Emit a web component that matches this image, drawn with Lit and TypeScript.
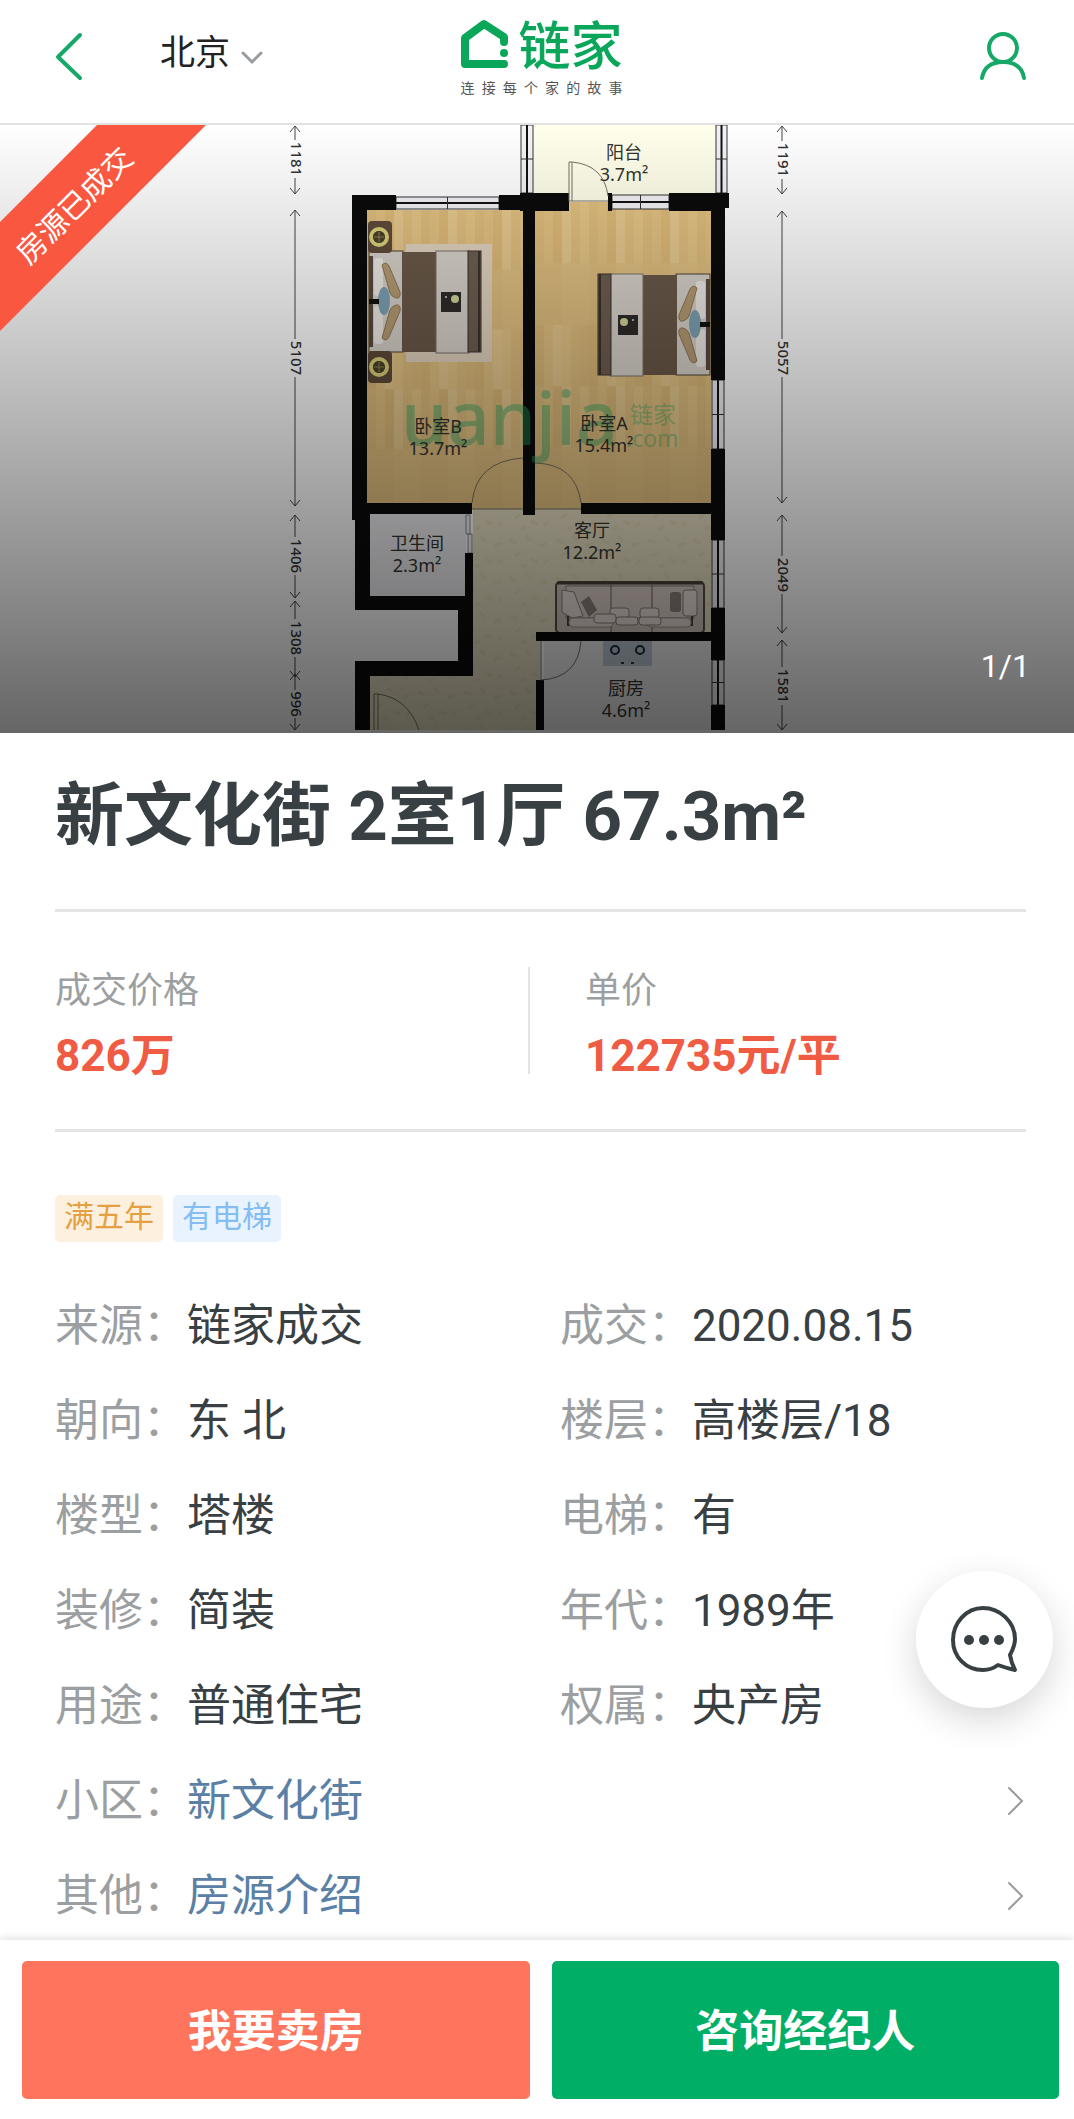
import { LitElement, html, svg, css } from "lit";
import { customElement, property } from "lit/decorators.js";

interface Fact {
  label: string;
  value: string;
}

const FACTS: Fact[] = [
  { label: "来源", value: "链家成交" },
  { label: "成交", value: "2020.08.15" },
  { label: "朝向", value: "东 北" },
  { label: "楼层", value: "高楼层/18" },
  { label: "楼型", value: "塔楼" },
  { label: "电梯", value: "有" },
  { label: "装修", value: "简装" },
  { label: "年代", value: "1989年" },
  { label: "用途", value: "普通住宅" },
  { label: "权属", value: "央产房" },
];

const LINKS: Fact[] = [
  { label: "小区", value: "新文化街" },
  { label: "其他", value: "房源介绍" },
];

/* Walls of the flat: x, y, width, height */
const WALLS = [
  [352, 195, 15, 325],
  [352, 195, 44, 15],
  [499, 195, 24, 15],
  [520, 193, 49, 18],
  [523, 195, 12, 320],
  [352, 503, 120, 11],
  [355, 514, 15, 96],
  [355, 596, 118, 14],
  [465, 553, 8, 57],
  [458, 596, 15, 80],
  [355, 661, 118, 15],
  [355, 661, 15, 69],
  [608, 193, 4, 18],
  [669, 193, 60, 15],
  [669, 193, 42, 18],
  [711, 193, 14, 187],
  [581, 503, 130, 11],
  [711, 449, 14, 91],
  [711, 608, 14, 52],
  [711, 705, 14, 25],
  [536, 632, 175, 9],
  [536, 680, 8, 50],
];

/* Upright windows: x, y, width, height */
const WINDOWS_V = [
  [521, 125, 12, 68],
  [716, 125, 11, 68],
  [712, 380, 12, 69],
  [712, 540, 12, 68],
  [712, 660, 12, 45],
];

/* Level windows: x, y, width, height */
const WINDOWS_H = [
  [396, 197, 103, 12],
  [612, 195, 57, 14],
];

/* Room names with the centre line and baseline of the first row */
const ROOMS: [string, string, number, number][] = [
  ["阳台", "3.7m²", 624, 159],
  ["卧室B", "13.7m²", 438, 433],
  ["卧室A", "15.4m²", 604, 430],
  ["卫生间", "2.3m²", 417, 550],
  ["客厅", "12.2m²", 592, 537],
  ["厨房", "4.6m²", 626, 695],
];

/* Dimension chains: start, end, middle of the number, number */
type Dim = [number, number, number, string];
const DIMS_LEFT: Dim[] = [
  [126, 194, 159, "1181"],
  [210, 506, 358, "5107"],
  [515, 598, 556, "1406"],
  [601, 677, 638, "1308"],
  [674, 730, 704, "996"],
];
const DIMS_RIGHT: Dim[] = [
  [126, 194, 160, "1191"],
  [211, 503, 358, "5057"],
  [515, 633, 575, "2049"],
  [640, 730, 686, "1581"],
];

@customElement("floor-plan")
export class FloorPlan extends LitElement {
  static styles = css`
    :host {
      display: block;
    }
    .plan {
      display: block;
      width: 100%;
      height: auto;
    }
    .room {
      font: 18px "Noto Sans", "Noto Sans CJK SC", sans-serif;
      fill: #33332e;
      text-anchor: middle;
    }
    .dim {
      font: 500 15px "Noto Sans", sans-serif;
      fill: #333;
      text-anchor: middle;
    }
    .mark {
      font: 500 74px "Noto Sans", sans-serif;
      fill: #2fa565;
      opacity: 0.45;
    }
    .mark-small {
      font: 23px "Noto Sans", "Noto Sans CJK SC", sans-serif;
      fill: #2fa565;
      opacity: 0.4;
    }
    .ribbon-text {
      font: 30px Roboto, "Noto Sans CJK SC", sans-serif;
      fill: #fff;
      text-anchor: middle;
    }
  `;

  private dims(x: number, list: Dim[]) {
    return list.map(([a, b, mid, text]) => {
      const half = text.length * 5 - 1;
      return svg`
        <path
          d="M${x} ${a}V${mid - half}M${x} ${mid + half}V${b}M${x - 5} ${a + 6}L${x} ${a}L${x + 5} ${a + 6}M${x - 5} ${b - 6}L${x} ${b}L${x + 5} ${b - 6}"
          fill="none" stroke="#444" stroke-width="1"
        />
        <text class="dim" transform="translate(${x - 4} ${mid}) rotate(90)">${text}</text>
      `;
    });
  }

  private planks(x: number, y: number, w: number, h: number) {
    const tones = ["#e0be7e", "#e6c687", "#e2c080", "#e8ca8f", "#dfbb79", "#e4c383"];
    const step = 9;
    const out = [svg`<rect x=${x} y=${y} width=${w} height=${h} fill="#e3c182" />`];
    for (let i = 0; i * step < w; i++) {
      for (let j = 0; j < 5; j++) {
        const top = y + (j * h) / 5;
        out.push(svg`<rect x=${x + i * step} y=${top} width=${Math.min(step, w - i * step)}
          height=${h / 5} fill=${tones[(i * 5 + j * 2 + ((i * j) % 3)) % 6]} />`);
      }
    }
    return out;
  }

  private bed() {
    return svg`
      <rect x="0" y="1" width="34" height="101" fill="#d9d3cb" stroke="#4b4038" />
      <rect x="0" y="6" width="4" height="91" fill="#5a4a44" />
      <rect x="5" y="8" width="9" height="38" rx="3" fill="#f0ece6" />
      <rect x="5" y="56" width="9" height="38" rx="3" fill="#f0ece6" />
      <path d="M13 15Q17 11 20 16L31 42Q32 49 27 48Q23 47 21 43Z" fill="#b79d74" stroke="#8d7858" />
      <path d="M13 88Q17 92 20 87L31 61Q32 54 27 55Q23 56 21 60Z" fill="#b79d74" stroke="#8d7858" />
      <ellipse cx="15" cy="51" rx="6" ry="14" fill="#7fa3b5" />
      <rect x="0" y="49" width="10" height="5" fill="#111" />
      <rect x="33" y="2" width="35" height="100" fill="#6b5a49" />
      <rect x="67" y="1" width="33" height="102" fill="#dad4cc" stroke="#7b736b" />
      <rect x="99" y="1" width="13" height="101" fill="#6f5f52" stroke="#3c332b" />
      <path d="M110 1V102" stroke="#3c332b" stroke-width="2" />
      <rect x="72" y="42" width="20" height="20" fill="#2f2c2a" />
      <circle cx="86" cy="49" r="4" fill="#d3d69a" />
      <circle cx="77" cy="47" r="1" fill="#ddd" />
    `;
  }

  private nightstand(cx: number, cy: number) {
    return svg`
      <rect x=${cx - 11} y=${cy - 16} width="24" height="32" rx="4" fill="#5f4b3a" />
      <circle cx=${cx} cy=${cy} r="8" fill="none" stroke="#dcd37a" stroke-width="4" />
      <circle cx=${cx} cy=${cy} r="6" fill="#4a4128" />
      <path d="M${cx - 5} ${cy}H${cx + 5}M${cx} ${cy - 5}V${cy + 5}" stroke="#8d8656" />
    `;
  }

  private sofa() {
    return svg`
      <rect x="556" y="582" width="148" height="51" rx="4" fill="#cfc2ba" stroke="#574b45" stroke-width="2" />
      <path d="M557 583H703" stroke="#4b403b" stroke-width="3" />
      <path d="M566 586H694V618H566Z" fill="#dccfc8" stroke="#8a7d75" />
      <path d="M611 585V633M652 585V633" stroke="#6d615a" />
      <path d="M562 590L574 592L583 616L572 618L562 612Z" fill="#e9dfda" stroke="#8a7d75" />
      <path d="M581 602L589 596L597 610L589 617Z" fill="#8c827b" />
      <rect x="670" y="592" width="11" height="20" rx="3" fill="#8c827b" />
      <rect x="683" y="590" width="14" height="26" rx="3" fill="#e9dfda" stroke="#8a7d75" />
      <path d="M568 616V625H598M692 616V625H662" fill="none" stroke="#4b403b" stroke-width="2" />
      <rect x="569" y="618" width="44" height="9" rx="4" fill="#e4dad4" stroke="#a0938a" />
      <rect x="647" y="618" width="44" height="9" rx="4" fill="#e4dad4" stroke="#a0938a" />
      <rect x="610" y="608" width="19" height="10" rx="3" fill="#e9dfda" stroke="#8a7d75" />
      <rect x="640" y="608" width="19" height="10" rx="3" fill="#e9dfda" stroke="#8a7d75" />
      <rect x="594" y="614" width="22" height="9" rx="3" fill="#e9dfda" stroke="#8a7d75" />
      <rect x="616" y="617" width="22" height="8" rx="3" fill="#e9dfda" stroke="#8a7d75" />
      <rect x="639" y="617" width="22" height="8" rx="3" fill="#e9dfda" stroke="#8a7d75" />
    `;
  }

  render() {
    return html`
      <svg class="plan" viewBox="0 125 1074 608" role="img" aria-label="户型图">
        <defs>
          <linearGradient id="shade" x1="0" y1="0" x2="0" y2="1">
            <stop offset="0" stop-color="#000" stop-opacity="0" />
            <stop offset="1" stop-color="#000" stop-opacity="0.6" />
          </linearGradient>
          <pattern id="stone" width="46" height="38" patternUnits="userSpaceOnUse">
            <rect width="46" height="38" fill="#e6dec2" />
            <path
              d="M4 8l7 3M20 4l5 5M34 14l7-3M9 24l6-4M25 27l7 3M38 32l4-4M15 35l5-2"
              stroke="#e0d7b4" stroke-width="3" fill="none"
            />
          </pattern>
        </defs>
        <rect x="0" y="125" width="1074" height="608" fill="#fff" />

        <rect x="527" y="125" width="195" height="76" fill="#ffffeb" />
        ${this.planks(367, 210, 156, 299)} ${this.planks(535, 202, 176, 307)}
        <path d="M473 509H711V633H540V730H370V676H473Z" fill="url(#stone)" />
        <rect x="370" y="514" width="96" height="83" fill="#ededf0" />
        <rect x="544" y="641" width="168" height="89" fill="#ededee" />

        <rect x="406" y="244" width="86" height="118" fill="#e4d5c1" />
        <g transform="translate(369 250)">${this.bed()}</g>
        <g transform="translate(710 273)"><g transform="scale(-1 1)">${this.bed()}</g></g>
        ${this.nightstand(379, 237)} ${this.nightstand(379, 367)} ${this.sofa()}

        <rect x="603" y="641" width="49" height="25" fill="#b9c6d0" />
        <circle cx="615" cy="650" r="4" fill="none" stroke="#1b2c3a" stroke-width="2" />
        <circle cx="640" cy="650" r="4" fill="none" stroke="#1b2c3a" stroke-width="2" />
        <path d="M621 663h3M631 663h3" stroke="#333" stroke-width="2" />

        ${WINDOWS_V.map(
          ([x, y, w, h]) => svg`
            <rect x=${x} y=${y} width=${w} height=${h} fill="#f4f2f7" stroke="#333" />
            <path d="M${x + w / 2} ${y}V${y + h}" stroke="#111" stroke-width="2" />
            <path d="M${x} ${y + h / 2}H${x + w}" stroke="#333" />`
        )}
        ${WINDOWS_H.map(
          ([x, y, w, h]) => svg`
            <rect x=${x} y=${y} width=${w} height=${h} fill="#f4f2f7" stroke="#333" />
            <path d="M${x} ${y + h / 2}H${x + w}" stroke="#111" stroke-width="2" />
            <path d="M${x + w / 2} ${y}V${y + h}" stroke="#333" />`
        )}
        <path d="M466 515H470V534H466ZM468 534H472V553H468Z" fill="#eee" stroke="#888" />

        ${WALLS.map(
          ([x, y, w, h]) => svg`<rect x=${x} y=${y} width=${w} height=${h} fill="#0b0b0b" />`
        )}
        <path
          d="M569 201V162H572V201M572 162Q604 165 608 196M569 201H608
             M535 463Q576 464 581 503M535 509H581M523 458Q476 461 472 503M472 509H523
             M541 641V680Q578 678 581 641M374 730V694H378V730M378 694Q408 698 419 730"
          fill="none" stroke="#75705f"
        />

        <text class="mark" x="401" y="445">uanjia</text>
        <text class="mark-small" x="630" y="423">链家</text>
        <text class="mark-small" x="626" y="447">.com</text>

        ${ROOMS.map(
          ([name, area, x, y]) => svg`
            <text class="room" x=${x} y=${y}>${name}</text>
            <text class="room" x=${x} y=${y + 22}>${area}</text>`
        )}
        ${this.dims(295, DIMS_LEFT)} ${this.dims(782, DIMS_RIGHT)}

        <rect x="0" y="125" width="1074" height="608" fill="url(#shade)" />
        <path d="M97 125H206L0 331V222Z" fill="#fa5741" />
        <text class="ribbon-text" transform="translate(82 213) rotate(-45)">房源已成交</text>
      </svg>
    `;
  }
}

@customElement("app-root")
export class AppRoot extends LitElement {
  @property() name = "新文化街 2室1厅 67.3m²";

  static styles = css`
    :host {
      display: block;
      font-family: Roboto, "Noto Sans CJK SC", sans-serif;
      color: #394043;
      background: #fff;
    }
    * {
      box-sizing: border-box;
    }
    .page {
      display: flex;
      flex-direction: column;
      min-height: 100vh;
    }
    button {
      font: inherit;
      color: inherit;
      background: none;
      border: 0;
      padding: 0;
      margin: 0;
      cursor: pointer;
    }
    a {
      color: inherit;
      text-decoration: none;
    }
    svg {
      display: block;
    }
    .top {
      display: grid;
      grid-template-columns: 1fr auto 1fr;
      align-items: start;
      height: 125px;
      padding: 18px 46px 0 55px;
      border-bottom: 2px solid #e2e2e2;
    }
    .top-left {
      display: flex;
      align-items: flex-start;
      gap: 76px;
      padding-top: 12px;
    }
    .city {
      display: flex;
      align-items: center;
      gap: 10px;
      padding-top: 2px;
      color: #222;
      font-size: 35px;
      line-height: 44px;
    }
    .logo {
      display: flex;
      flex-direction: column;
      gap: 2px;
    }
    .brand {
      display: flex;
      align-items: flex-start;
      gap: 9px;
      color: #0aa65a;
      font-size: 52px;
      font-weight: 500;
      line-height: 60px;
    }
    .slogan {
      display: flex;
      justify-content: space-between;
      color: #555;
      font-size: 14px;
      line-height: 16px;
    }
    .user {
      justify-self: end;
      padding-top: 12px;
    }
    .hero {
      position: relative;
    }
    .count {
      position: absolute;
      right: 44px;
      bottom: 49px;
      color: #fff;
      font-size: 32px;
      line-height: 36px;
    }
    .body {
      flex: 1;
      padding: 0 48px 0 55px;
    }
    .title {
      margin: 0;
      padding: 44px 0 52px;
      font-size: 69px;
      font-weight: 700;
      line-height: 80px;
    }
    .prices {
      display: grid;
      grid-template-columns: 473px 1fr;
      margin: 0;
      padding: 55px 0;
      border: solid #e4e4e4;
      border-width: 3px 0;
    }
    .price {
      display: flex;
      flex-direction: column;
      gap: 22px;
    }
    .price + .price {
      padding-left: 55px;
      border-left: 2px solid #e4e4e4;
    }
    .price dt {
      color: #9c9fa1;
      font-size: 36px;
      line-height: 49px;
    }
    .price dd {
      margin: 0;
      color: #f05b44;
      font-size: 44px;
      font-weight: 700;
      line-height: 36px;
    }
    .tags {
      display: flex;
      gap: 10px;
      margin: 63px 0 60px;
      padding: 0;
      list-style: none;
    }
    .tag {
      padding: 0 9px 3px;
      border-radius: 5px;
      font-size: 30px;
      line-height: 44px;
    }
    .tag-amber {
      color: #e4a041;
      background: #fdf0de;
    }
    .tag-blue {
      color: #84bcf4;
      background: #e8f3ff;
    }
    .facts {
      display: grid;
      grid-template-columns: 52fr 48fr;
      gap: 47px 0;
      margin: 0;
      font-size: 44px;
      line-height: 48px;
    }
    .fact {
      display: flex;
      align-items: center;
    }
    .fact dt {
      color: #9c9fa1;
    }
    .fact dd {
      margin: 0;
    }
    .wide {
      grid-column: 1 / -1;
    }
    .wide dd {
      flex: 1;
    }
    .more {
      display: flex;
      align-items: center;
      justify-content: space-between;
      color: #5a80a5;
    }
    .chat {
      position: fixed;
      right: 21px;
      bottom: 411px;
      display: flex;
      align-items: center;
      justify-content: center;
      width: 137px;
      height: 137px;
      border-radius: 50%;
      background: #fff;
      box-shadow: 0 12px 36px rgba(0, 0, 0, 0.16);
    }
    .bar {
      position: sticky;
      bottom: 0;
      display: flex;
      gap: 22px;
      padding: 21px 15px 20px 22px;
      background: #fff;
      box-shadow: 0 -2px 8px rgba(0, 0, 0, 0.12);
    }
    .action {
      flex: 1;
      height: 138px;
      padding-bottom: 4px;
      border-radius: 5px;
      color: #fff;
      font-size: 44px;
      font-weight: 700;
    }
    .sell {
      background: #ff745c;
    }
    .ask {
      background: #00ae66;
    }
  `;

  render() {
    return html`
      <div class="page">
        <header class="top">
          <div class="top-left">
            <button class="back" aria-label="返回">
              <svg width="29" height="54" viewBox="0 0 29 54" fill="none">
                <path d="M25 5L3 27L25 48" stroke="#16a866" stroke-width="4"
                  stroke-linecap="round" stroke-linejoin="round" />
              </svg>
            </button>
            <button class="city">
              北京
              <svg width="24" height="28" viewBox="0 0 24 28" fill="none">
                <path d="M3 13L12 22L21 13" stroke="#999c9f" stroke-width="3" stroke-linecap="round" />
              </svg>
            </button>
          </div>
          <a class="logo" href="#" aria-label="链家">
            <span class="brand">
              <svg width="49" height="52" viewBox="0 0 49 52" fill="none">
                <path d="M44 24V19L24 6L5 20V46H44" stroke="#0aa65a" stroke-width="8"
                  stroke-linecap="round" stroke-linejoin="round" />
                <circle cx="44" cy="35" r="4" fill="#0aa65a" />
              </svg>
              链家
            </span>
            <span class="slogan">${[..."连接每个家的故事"].map((c) => html`<span>${c}</span>`)}</span>
          </a>
          <button class="user" aria-label="我的">
            <svg width="50" height="54" viewBox="0 0 50 54" fill="none" stroke="#16a866"
              stroke-width="4" stroke-linecap="round">
              <ellipse cx="25" cy="18" rx="14" ry="14" />
              <path d="M4 48C6 37 14 32 25 32S44 37 46 48" />
            </svg>
          </button>
        </header>

        <div class="hero">
          <floor-plan></floor-plan>
          <span class="count">1/1</span>
        </div>

        <main class="body">
          <h1 class="title">${this.name}</h1>
          <dl class="prices">
            <div class="price"><dt>成交价格</dt><dd>826万</dd></div>
            <div class="price"><dt>单价</dt><dd>122735元/平</dd></div>
          </dl>
          <ul class="tags">
            <li class="tag tag-amber">满五年</li>
            <li class="tag tag-blue">有电梯</li>
          </ul>
          <dl class="facts">
            ${FACTS.map(
              (f) => html`<div class="fact"><dt>${f.label}：</dt><dd>${f.value}</dd></div>`
            )}
            ${LINKS.map(
              (f) => html`
                <div class="fact wide">
                  <dt>${f.label}：</dt>
                  <dd>
                    <a class="more" href="#">
                      ${f.value}
                      <svg width="20" height="32" viewBox="0 0 20 32" fill="none">
                        <path d="M3 3L16 16L3 29" stroke="#999c9f" stroke-width="2" stroke-linecap="round" />
                      </svg>
                    </a>
                  </dd>
                </div>
              `
            )}
          </dl>
        </main>

        <button class="chat" aria-label="在线咨询">
          <svg width="70" height="70" viewBox="0 0 70 70" fill="none">
            <path
              d="M48 60C44 63 39 65 33 65C16 65 3 52 3 35S16 3 33 3S65 17 65 34C65 41 62 46 60 50Q61 57 65 65Q56 63 48 60Z"
              stroke="#394043" stroke-width="4" stroke-linejoin="round"
            />
            <circle cx="19" cy="35" r="5" fill="#394043" />
            <circle cx="34" cy="35" r="5" fill="#394043" />
            <circle cx="49" cy="35" r="5" fill="#394043" />
          </svg>
        </button>

        <footer class="bar">
          <button class="action sell">我要卖房</button>
          <button class="action ask">咨询经纪人</button>
        </footer>
      </div>
    `;
  }
}
